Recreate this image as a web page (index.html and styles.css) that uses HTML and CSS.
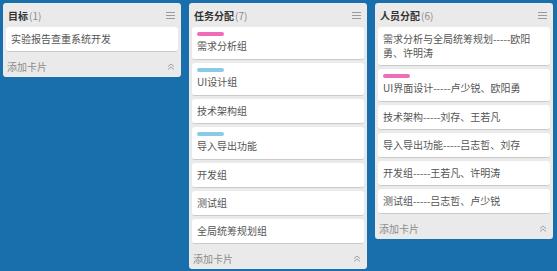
FILE: index.html
```html
<!DOCTYPE html>
<html lang="zh-CN">
<head>
    <meta charset="UTF-8">
    <title>看板</title>
    <link rel="stylesheet" href="styles.css">
</head>
<body>
    <div class="board">
        <div class="list">
            <div class="list-header">
                <span class="list-title">目标<span class="count">(1)</span></span>
                <svg class="menu" width="9" height="7" viewBox="0 0 9 7"><path d="M0 0.5H9M0 3.5H9M0 6.5H9" stroke="#9a9a9a" stroke-width="1"/></svg>
            </div>
            <div class="card">实验报告查重系统开发</div>
            <div class="list-footer">
                <span>添加卡片</span>
                <svg class="collapse" width="8" height="7" viewBox="0 0 8 7"><path d="M1 3.5L4 1L7 3.5M1 6.5L4 4L7 6.5" fill="none" stroke="#a0a0a0" stroke-width="1"/></svg>
            </div>
        </div>

        <div class="list">
            <div class="list-header">
                <span class="list-title">任务分配<span class="count">(7)</span></span>
                <svg class="menu" width="9" height="7" viewBox="0 0 9 7"><path d="M0 0.5H9M0 3.5H9M0 6.5H9" stroke="#9a9a9a" stroke-width="1"/></svg>
            </div>
            <div class="card labeled"><div class="label pink"></div>需求分析组</div>
            <div class="card labeled"><div class="label blue"></div>UI设计组</div>
            <div class="card">技术架构组</div>
            <div class="card labeled"><div class="label blue"></div>导入导出功能</div>
            <div class="card">开发组</div>
            <div class="card">测试组</div>
            <div class="card">全局统筹规划组</div>
            <div class="list-footer">
                <span>添加卡片</span>
                <svg class="collapse" width="8" height="7" viewBox="0 0 8 7"><path d="M1 3.5L4 1L7 3.5M1 6.5L4 4L7 6.5" fill="none" stroke="#a0a0a0" stroke-width="1"/></svg>
            </div>
        </div>

        <div class="list">
            <div class="list-header">
                <span class="list-title">人员分配<span class="count">(6)</span></span>
                <svg class="menu" width="9" height="7" viewBox="0 0 9 7"><path d="M0 0.5H9M0 3.5H9M0 6.5H9" stroke="#9a9a9a" stroke-width="1"/></svg>
            </div>
            <div class="card">需求分析与全局统筹规划-----欧阳<br>勇、许明涛</div>
            <div class="card labeled"><div class="label pink"></div>UI界面设计-----卢少锐、欧阳勇</div>
            <div class="card">技术架构-----刘存、王若凡</div>
            <div class="card">导入导出功能-----吕志哲、刘存</div>
            <div class="card">开发组-----王若凡、许明涛</div>
            <div class="card">测试组-----吕志哲、卢少锐</div>
            <div class="list-footer">
                <span>添加卡片</span>
                <svg class="collapse" width="8" height="7" viewBox="0 0 8 7"><path d="M1 3.5L4 1L7 3.5M1 6.5L4 4L7 6.5" fill="none" stroke="#a0a0a0" stroke-width="1"/></svg>
            </div>
        </div>
    </div>
</body>
</html>
```

FILE: styles.css
```css
body {
    margin: 0;
    height: 100vh;
    background-color: #186fac;
    font-family: "Noto Sans CJK SC", "Noto Sans", sans-serif;
    font-size: 10px;
    color: #555;
    overflow: hidden;
}

.board {
    display: flex;
    align-items: flex-start;
    gap: 8px;
    padding: 3px;
}

.list {
    width: 178px;
    padding: 0 3px;
    box-sizing: border-box;
    background-color: #eaeaea;
    border-radius: 3px;
}

.list-header {
    display: flex;
    align-items: center;
    justify-content: space-between;
    height: 24px;
    padding: 0 3px 0 2px;
}

.list-title {
    font-weight: bold;
    color: #333;
}

.count {
    font-weight: normal;
    color: #8a8a8a;
    margin-left: 1px;
}

.card {
    background-color: #fff;
    border-radius: 3px;
    border-bottom: 1px solid #cacaca;
    padding: 5px 5px 5px;
    margin-bottom: 3px;
    line-height: 14px;
}

.card.labeled {
    padding-bottom: 6px;
}

.label {
    width: 27px;
    height: 4px;
    border-radius: 2px;
    margin-bottom: 3px;
}

.pink {
    background-color: #f06cb6;
}

.blue {
    background-color: #89cae6;
}

.list-footer {
    display: flex;
    align-items: center;
    justify-content: space-between;
    height: 22px;
    padding: 0 3px 0 1px;
    color: #8c8c8c;
}
```
